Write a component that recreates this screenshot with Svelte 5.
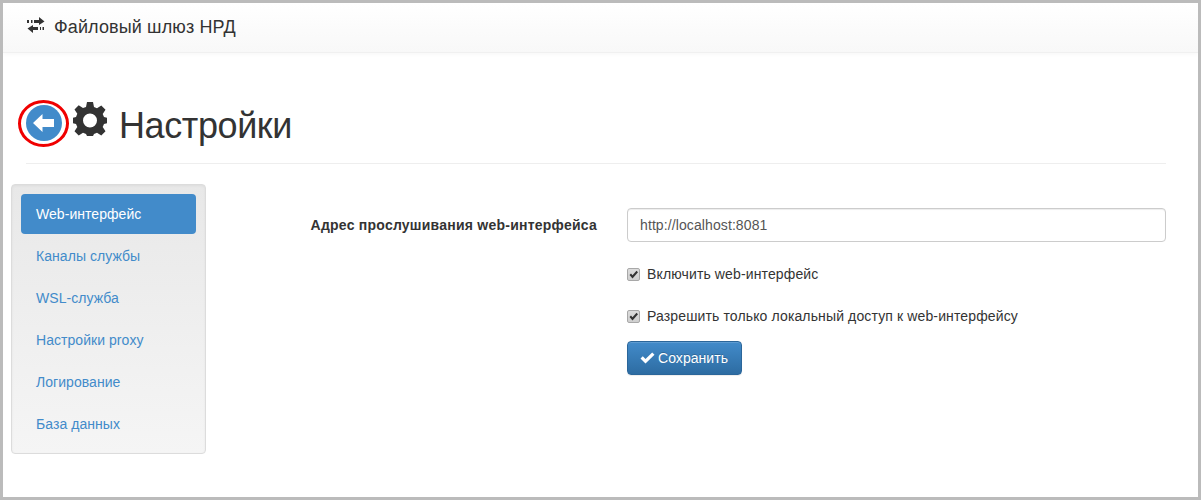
<script>
  const items = ['Web-интерфейс', 'Каналы службы', 'WSL-служба', 'Настройки proxy', 'Логирование', 'База данных'];
  let active = $state(0);
  let url = $state('http://localhost:8081');
  let enabled = $state(true);
  let localOnly = $state(true);
</script>

<div class="frame">
  <header class="navbar">
    <svg class="brand-icon" width="18" height="16" viewBox="0 0 18 16">
      <path d="M0 3h2v3H0zM4 3h1.500v3H4zM7 3h5V0l5.500 4.500L12 8V6H7z" fill="#333" />
      <path d="M17 10h-1.500v3H17zM14 10h-1v3h1zM11 10H6V8L.5 11.500 6 16v-3h5z" fill="#333" />
    </svg>
    <span class="brand">Файловый шлюз НРД</span>
  </header>

  <div class="page-header">
    <div class="back">
      <svg width="36" height="36" viewBox="0 0 36 36">
        <circle cx="18" cy="18" r="18" fill="#428bca" />
        <path d="M7 18l9.500-9V14H28v8H16.500v5z" fill="#fff" />
      </svg>
    </div>
    <svg class="gear" width="36" height="36" viewBox="0 0 36 36">
      <path fill="#333" fill-rule="evenodd" d="M15 1h6l1 5 3 1.300 4.300-2.800 4.200 4.200-2.800 4.300L32 16l3 .8v5.400l-3 .8-1.300 3 2.800 4.300-4.200 4.200-4.300-2.800-3 1.300-1 2h-6l-1-2-3-1.300-4.300 2.800-4.200-4.200 2.800-4.300L4 23l-3-.8v-5.400L4 16l1.300-3.200-2.800-4.300 4.200-4.200L11 7.100 14 6z M18 12.500a7 7 0 1 0 0 14 7 7 0 0 0 0-14z" />
    </svg>
    <h1>Настройки</h1>
  </div>

  <div class="content">
    <nav class="well">
      {#each items as item, i}
        <button class="pill" class:active={active === i} onclick={() => active = i}>{item}</button>
      {/each}
    </nav>

    <form class="form" onsubmit={(e) => e.preventDefault()}>
      <div class="row first">
        <label class="label" for="addr">Адрес прослушивания web-интерфейса</label>
        <input id="addr" class="input" type="text" bind:value={url} />
      </div>
      <div class="row check">
        <label>
          <span class="box">
            <input type="checkbox" bind:checked={enabled} />
            {#if enabled}<svg width="13" height="13" viewBox="0 0 13 13"><path d="M2.500 7L4 5.500 5.500 7.200 9.500 2.800 11 4.200 5.500 10.500z" fill="#333" /></svg>{/if}
          </span>
          Включить web-интерфейс
        </label>
      </div>
      <div class="row check">
        <label>
          <span class="box">
            <input type="checkbox" bind:checked={localOnly} />
            {#if localOnly}<svg width="13" height="13" viewBox="0 0 13 13"><path d="M2.500 7L4 5.500 5.500 7.200 9.500 2.800 11 4.200 5.500 10.500z" fill="#333" /></svg>{/if}
          </span>
          Разрешить только локальный доступ к web-интерфейсу
        </label>
      </div>
      <div class="row">
        <button class="save" type="submit">
          <svg width="15" height="12" viewBox="0 0 15 12"><path d="M0.500 6.500L2.800 4.200 5.500 6.900 12.200 0.500 14.500 2.800 5.500 11.500z" fill="#fff" /></svg>
          Сохранить
        </button>
      </div>
    </form>
  </div>
</div>

<style>
  :global(body) {
    margin: 0;
    background: #fff;
  }
  .frame {
    box-sizing: border-box;
    width: 1201px;
    height: 500px;
    border: 3px solid #bbb;
    background: #fff;
    font-family: "Liberation Sans", Arial, sans-serif;
    font-size: 14px;
    line-height: 20px;
    color: #333;
    overflow: hidden;
  }
  .navbar {
    box-sizing: border-box;
    height: 50px;
    display: flex;
    align-items: center;
    gap: 9px;
    padding: 0 0 2px 24px;
    background: linear-gradient(to bottom, #fff, #f8f8f8);
    border-bottom: 1px solid #f0f0f0;
    box-shadow: 0 1px 5px rgba(0, 0, 0, 0.04);
  }
  .brand-icon {
    margin-top: -3px;
  }
  .brand {
    font-size: 18px;
    letter-spacing: 0.12px;
    color: #333;
  }
  .page-header {
    display: flex;
    align-items: center;
    height: 111px;
    margin: 0 32px 0 23px;
    border-bottom: 1px solid #eee;
    box-sizing: border-box;
    padding-top: 30px;
  }
  .back {
    box-sizing: border-box;
    width: 51px;
    height: 47px;
    margin-left: -8px;
    border: 3px solid #f00000;
    border-radius: 50%;
    display: flex;
    align-items: center;
    justify-content: center;
    flex: none;
  }
  .gear {
    margin-left: 3px;
    margin-top: -8px;
    flex: none;
  }
  h1 {
    margin: 5px 0 0 11px;
    font-size: 36px;
    font-weight: 500;
    line-height: 40px;
    letter-spacing: -0.4px;
    color: #333;
  }
  .content {
    display: flex;
    margin: 20px 32px 0 8px;
  }
  .well {
    box-sizing: border-box;
    width: 195px;
    height: 270px;
    flex: none;
    padding: 9px;
    display: flex;
    flex-direction: column;
    gap: 2px;
    background: linear-gradient(to bottom, #e8e8e8, #f5f5f5);
    border: 1px solid #dcdcdc;
    border-radius: 4px;
    box-shadow: inset 0 1px 3px rgba(0, 0, 0, 0.05);
  }
  .pill {
    height: 40px;
    padding: 0 15px;
    border: none;
    border-radius: 4px;
    background: none;
    font: inherit;
    letter-spacing: 0.05px;
    text-align: left;
    color: #428bca;
    cursor: pointer;
  }
  .pill.active {
    background: #428bca;
    color: #fff;
  }
  .form {
    flex: 1;
    display: flex;
    flex-direction: column;
    padding-left: 421px;
  }
  .row {
    position: relative;
  }
  .row.first {
    margin-top: 24px;
    margin-bottom: 12px;
  }
  .label {
    position: absolute;
    right: 100%;
    top: 7px;
    margin-right: 30px;
    white-space: nowrap;
    font-weight: 700;
    letter-spacing: 0.235px;
  }
  .input {
    box-sizing: border-box;
    display: block;
    width: 100%;
    height: 34px;
    padding: 6px 12px;
    border: 1px solid #ccc;
    border-radius: 4px;
    font: inherit;
    letter-spacing: 0.1px;
    color: #555;
    box-shadow: inset 0 1px 1px rgba(0, 0, 0, 0.075);
  }
  .check {
    height: 20px;
    margin: 10px 0 12px;
    letter-spacing: 0.13px;
  }
  .check label {
    display: flex;
    align-items: center;
    gap: 7px;
  }
  .box {
    position: relative;
    width: 13px;
    height: 13px;
    flex: none;
  }
  .box input {
    appearance: none;
    box-sizing: border-box;
    display: block;
    width: 13px;
    height: 13px;
    margin: 0;
    border: 1px solid #a8a8a8;
    border-radius: 2px;
    background: linear-gradient(to bottom, #dcdcdc, #cfcfcf);
  }
  .box svg {
    position: absolute;
    left: 0;
    top: 0;
    pointer-events: none;
  }
  .save {
    display: inline-flex;
    align-items: center;
    gap: 3px;
    box-sizing: border-box;
    height: 34px;
    margin-top: 3px;
    padding: 0 13px 0 12px;
    border: 1px solid #2b669a;
    border-radius: 4px;
    background: linear-gradient(to bottom, #428bca, #2d6ca2);
    box-shadow: inset 0 1px 0 rgba(255, 255, 255, 0.15), 0 1px 1px rgba(0, 0, 0, 0.075);
    color: #fff;
    font: inherit;
    letter-spacing: 0.05px;
    text-shadow: 0 -1px 0 rgba(0, 0, 0, 0.2);
    cursor: pointer;
  }
</style>
